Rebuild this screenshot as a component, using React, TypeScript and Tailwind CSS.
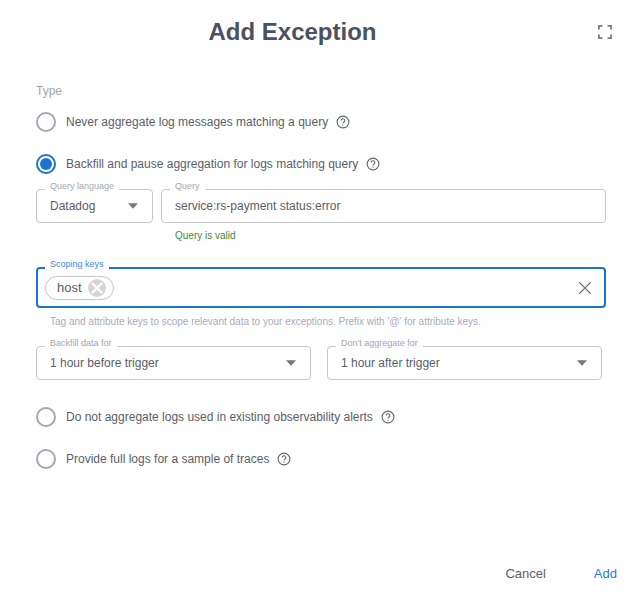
import { X } from "lucide-react";

function HelpIcon() {
  return (
    <svg width="14" height="14" viewBox="0 0 14 14" fill="none" className="shrink-0 text-[#5f6470]">
      <circle cx="7" cy="7" r="5.9" stroke="currentColor" strokeWidth="1.1" />
      <path d="M5.2 5.6a1.8 1.8 0 1 1 2.7 1.5c-.6.4-.9.7-.9 1.3" stroke="currentColor" strokeWidth="1.1" />
      <circle cx="7" cy="10.1" r=".7" fill="currentColor" />
    </svg>
  );
}

function Radio({ label, checked, className }: { label: string; checked?: boolean; className?: string }) {
  return (
    <div className={`flex items-center h-5 ${className ?? ""}`}>
      <span
        className={`w-5 h-5 rounded-full border-2 flex items-center justify-center shrink-0 ${
          checked ? "border-[#1a73d4]" : "border-[#a3a5b8]"
        }`}
      >
        {checked && <span className="w-3 h-3 rounded-full bg-[#1a73d4]" />}
      </span>
      <span className="ml-[10px] mr-[8px] text-[12px] text-[#5a5e6c]">{label}</span>
      <HelpIcon />
    </div>
  );
}

function Caret() {
  return (
    <svg width="10" height="6" viewBox="0 0 10 6" className="shrink-0">
      <path d="M0 .3h10L5 5.7z" fill="#74767c" />
    </svg>
  );
}

function Field({
  label,
  value,
  select,
  className,
}: {
  label: string;
  value: string;
  select?: boolean;
  className?: string;
}) {
  return (
    <div
      className={`relative h-[34px] border border-[#c8c8cc] rounded-[4px] flex items-center justify-between pl-[13px] pr-[13px] ${className ?? ""}`}
    >
      <span className="absolute left-[8px] -top-[10px] bg-white px-[5px] text-[9px] leading-[12px] text-[#a3a5b3]">
        {label}
      </span>
      <span className="text-[12px] text-[#5a5e6c]">{value}</span>
      {select && <Caret />}
    </div>
  );
}

export default function App() {
  return (
    <div
      className="w-[644px] h-[594px] bg-white flex flex-col overflow-hidden"
      style={{ fontFamily: "'Liberation Sans', Arial, sans-serif" }}
    >
      {/* Header */}
      <div className="relative h-[64px] flex items-center justify-center pr-[59px]">
        <h1 className="text-[24px] font-bold text-[#4b5160]">Add Exception</h1>
        <svg width="14" height="14" viewBox="0 0 14 14" className="absolute left-[598px] top-[25px]" fill="none">
          <path d="M.9 4.500V.9h3.600M9.500.9h3.600v3.600M13.100 9.500v3.600H9.500M4.500 13.100H.9V9.500" stroke="#7f7f7f" strokeWidth="1.9" />
        </svg>
      </div>

      <div className="pl-[36px] pr-[38px] flex flex-col flex-1">
        <div className="mt-[20px] text-[12px] leading-[14px] text-[#a3a5b8]">Type</div>

        <Radio label="Never aggregate log messages matching a query" className="mt-[14px]" />
        <Radio label="Backfill and pause aggregation for logs matching query" checked className="mt-[22px]" />

        <div className="flex gap-[8px] mt-[15px]">
          <Field label="Query language" value="Datadog" select className="w-[117px] pr-[14px]" />
          <Field label="Query" value="service:rs-payment status:error" className="flex-1" />
        </div>
        <div className="ml-[139px] mt-[7px] text-[10px] leading-[12px] text-[#3d8b40]">Query is valid</div>

        {/* Scoping keys */}
        <div className="relative mt-[25px] h-[41px] border-2 border-[#1a73d4] rounded-[4px] flex items-center justify-between pl-[7px] pr-[8px]">
          <span className="absolute left-[7px] -top-[11px] bg-white px-[5px] text-[9px] leading-[12px] text-[#3b8ae0]">
            Scoping keys
          </span>
          <span className="h-[24px] w-[69px] border border-[#c4c4c8] rounded-full flex items-center justify-between pl-[11px] pr-[7px]">
            <span className="text-[13px] text-[#5a5e6c]">host</span>
            <span className="w-[18px] h-[18px] rounded-full bg-[#d6d6d8] flex items-center justify-center">
              <X size={18} strokeWidth={2.6} className="text-white" />
            </span>
          </span>
          <X size={22} strokeWidth={1.2} className="text-[#6f7074]" />
        </div>
        <div className="ml-[14px] mt-[8px] text-[10px] leading-[12px] text-[#a9abbb]">
          Tag and attribute keys to scope relevant data to your exceptions. Prefix with '@' for attribute keys.
        </div>

        <div className="flex gap-[16px] mt-[18px] w-[566px]">
          <Field label="Backfill data for" value="1 hour before trigger" select className="flex-1 pr-[14px]" />
          <Field label="Don't aggregate for" value="1 hour after trigger" select className="flex-1 pr-[14px]" />
        </div>

        <Radio label="Do not aggregate logs used in existing observability alerts" className="mt-[27px]" />
        <Radio label="Provide full logs for a sample of traces" className="mt-[22px]" />

        <div className="mt-auto mb-[13px] -mr-[11px] flex justify-end items-center gap-[48px] text-[13px] leading-[14px]">
          <span className="text-[#5a5e6c]">Cancel</span>
          <span className="text-[#2a7bd8]">Add</span>
        </div>
      </div>
    </div>
  );
}
